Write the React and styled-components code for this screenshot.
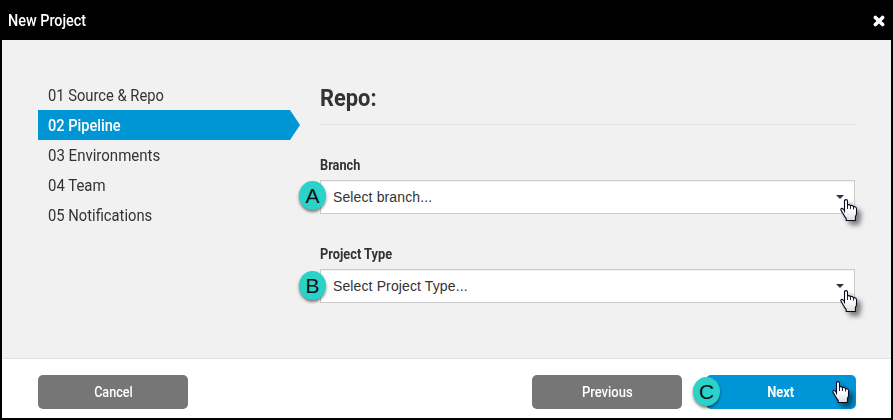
import React from "react";
import styled, { createGlobalStyle } from "styled-components";

const GlobalStyle = createGlobalStyle`
  * { box-sizing: border-box; }
  body { margin: 0; background: #000; }
`;

const Dialog = styled.div`
  width: 893px;
  height: 420px;
  padding: 0 2px 2px;
  background: #000;
  display: flex;
  flex-direction: column;
  color: #333;
  font-family: Roboto, "Noto Sans", sans-serif;
`;

const Header = styled.header`
  height: 40px;
  padding: 1px 6px 0 6px;
  display: flex;
  align-items: center;
  justify-content: space-between;
  color: #fff;
`;

/* Narrows the face to the condensed proportions of the interface font. */
const Narrow = styled.span`
  display: block;
  white-space: nowrap;
  font-size: ${(p) => p.$size}px;
  font-weight: ${(p) => p.$weight || 400};
  line-height: ${(p) => p.$line || 20}px;
  transform: scaleX(${(p) => p.$scale});
  transform-origin: ${(p) => (p.$center ? "center" : "left")};
`;

const CloseButton = styled.button`
  width: 12px;
  height: 12px;
  padding: 0;
  border: 0;
  background: none;
  display: flex;
`;

const Body = styled.main`
  height: 318px;
  background: #f1f1f1;
  display: grid;
  grid-template-columns: 262px 535px;
  column-gap: 20px;
  padding-left: 36px;
`;

const Steps = styled.nav`
  padding-top: 40px;
  display: flex;
  flex-direction: column;
`;

const Step = styled.div`
  height: 30px;
  padding: 2px 0 0 9.5px;
  display: flex;
  align-items: center;
  color: ${(p) => (p.$active ? "#fff" : "#333")};
  background: ${(p) => (p.$active ? "#0096d6" : "transparent")};
  clip-path: ${(p) =>
    p.$active ? "polygon(0 0, 252px 0, 100% 50%, 252px 100%, 0 100%)" : "none"};
`;

const Form = styled.section`
  padding-top: 40px;
`;

const Title = styled.h1`
  margin: 0 0 30px;
  height: 45px;
  padding-top: 3px;
  border-bottom: 1px solid #e3e3e3;
`;

const Field = styled.div`
  height: 89px;
`;

const FieldLabel = styled.label`
  display: block;
  height: 25px;
`;

const Select = styled.div`
  position: relative;
  height: 34px;
  padding: 0 10px 0 12px;
  border: 1px solid #ccc;
  background: #fff;
  box-shadow: inset 0 1px 1px rgba(0, 0, 0, 0.06);
  display: flex;
  align-items: center;
  justify-content: space-between;
  font: 14px/20px "Liberation Sans", Arial, sans-serif;
  letter-spacing: 0.12px;
`;

const Caret = styled.i`
  border: 4px solid transparent;
  border-top-color: #333;
  border-bottom: 0;
`;

const Badge = styled.span`
  position: absolute;
  left: ${(p) => p.$left}px;
  top: ${(p) => p.$top}px;
  width: 27px;
  height: 29px;
  border-radius: 50%;
  background: #2ad2c9;
  box-shadow: 0 2px 3px rgba(0, 0, 0, 0.5);
  color: #111;
  font: 21px/30px "Liberation Sans", Arial, sans-serif;
  text-align: center;
`;

const HandSvg = styled.svg`
  position: absolute;
  left: ${(p) => p.$left}px;
  top: ${(p) => p.$top}px;
  overflow: visible;
  filter: drop-shadow(4px 4px 2.5px rgba(0, 0, 0, 0.5));
`;

const Footer = styled.footer`
  height: 60px;
  padding: 16px 35px 0 36px;
  border-top: 1px solid #e3e3e3;
  background: #fff;
  display: flex;
`;

const Button = styled.button`
  position: relative;
  width: 150px;
  height: 34px;
  margin-left: ${(p) => p.$gap || 0}px;
  padding: 0;
  border: 0;
  border-radius: 5px;
  background: ${(p) => (p.$primary ? "#0096d6" : "#767676")};
  color: #fff;
  font-family: inherit;
  display: flex;
  align-items: center;
  justify-content: center;
`;

function Hand({ left, top }) {
  return (
    <HandSvg $left={left} $top={top} width="18" height="23" viewBox="0 0 18 23">
      <defs>
        <linearGradient id="hand" x1="0" y1="0" x2="0" y2="1">
          <stop offset="0.5" stopColor="#fff" />
          <stop offset="1" stopColor="#dcdcdc" />
        </linearGradient>
      </defs>
      <path
        d="M4.5 13V2Q4.5.6 6 .6T7.5 2V6Q9.2 5 10.5 6.6Q12.4 5.8 13.5 7.6Q16.5 7.4 16.5 10V14.5Q16.4 16 15.4 17.5V21.5H6.2V19.3Q4.4 17.4 3.4 15.2L1 11.4Q.4 9.4 2 9.4 3 9.4 4.5 11.8Z"
        fill="url(#hand)"
        stroke="#080822"
        strokeWidth="1.1"
        strokeLinejoin="round"
      />
      <path d="M7.5 6V10M10.5 6.8V10M13.5 8V10.5" stroke="#080822" strokeWidth="0.9" />
    </HandSvg>
  );
}

const steps = [
  ["01 Source & Repo", 0.893],
  ["02 Pipeline", 0.885],
  ["03 Environments", 0.91],
  ["04 Team", 0.905],
  ["05 Notifications", 0.895],
];

export default function App() {
  return (
    <>
      <GlobalStyle />
      <Dialog>
        <Header>
          <Narrow $size={16} $weight={500} $scale={0.9}>New Project</Narrow>
          <CloseButton aria-label="Close">
            <svg width="12" height="12" viewBox="0 0 12 12">
              <path d="M2.4 2.4L9.6 9.6M9.6 2.4L2.4 9.6" stroke="#fff" strokeWidth="3.6" strokeLinecap="round" />
            </svg>
          </CloseButton>
        </Header>
        <Body>
          <Steps>
            {steps.map(([text, scale], i) => (
              <Step key={text} $active={i === 1}>
                <Narrow $size={16.5} $weight={i === 1 ? 500 : 400} $scale={scale}>{text}</Narrow>
              </Step>
            ))}
          </Steps>
          <Form>
            <Title><Narrow $size={24} $weight={700} $line={30} $scale={0.91}>Repo:</Narrow></Title>
            <Field>
              <FieldLabel><Narrow $size={14} $weight={700} $scale={0.91}>Branch</Narrow></FieldLabel>
              <Select>
                Select branch...
                <Caret />
                <Badge $left={-22} $top={0}>A</Badge>
                <Hand left={519} top={18} />
              </Select>
            </Field>
            <Field>
              <FieldLabel><Narrow $size={14} $weight={700} $scale={0.915}>Project Type</Narrow></FieldLabel>
              <Select>
                Select Project Type...
                <Caret />
                <Badge $left={-22} $top={1}>B</Badge>
                <Hand left={519} top={20} />
              </Select>
            </Field>
          </Form>
        </Body>
        <Footer>
          <Button><Narrow $center $size={14} $weight={500} $scale={0.9}>Cancel</Narrow></Button>
          <Button $gap={344}><Narrow $center $size={14} $weight={500} $scale={0.93}>Previous</Narrow></Button>
          <Button $primary $gap={24}>
            <Narrow $center $size={14} $weight={700} $scale={0.92}>Next</Narrow>
            <Badge $left={-13} $top={2}>C</Badge>
            <Hand left={126} top={6} />
          </Button>
        </Footer>
      </Dialog>
    </>
  );
}
